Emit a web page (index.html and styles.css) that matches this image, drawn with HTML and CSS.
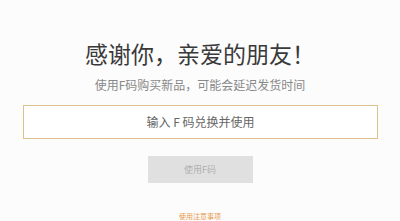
FILE: index.html
```html
<!DOCTYPE html>
<html lang="zh">
<head>
<meta charset="utf-8">
<link rel="stylesheet" href="styles.css">
</head>
<body>
<main class="page">
  <h1 class="title">感谢你，亲爱的朋友！</h1>
  <p class="subtitle">使用F码购买新品，可能会延迟发货时间</p>
  <div class="code-input"><span class="placeholder">输入 F 码兑换并使用</span></div>
  <button class="use-btn">使用F码</button>
  <a class="notes">使用注意事项</a>
</main>
</body>
</html>
```
FILE: styles.css
```css
html, body {
  margin: 0;
  padding: 0;
  background: #fcfcfc;
  font-family: "Noto Sans CJK SC", "Noto Sans", sans-serif;
}
.page {
  display: flex;
  flex-direction: column;
  align-items: center;
  height: 221px;
  overflow: hidden;
}
.title {
  margin: 38px 0 0;
  font-size: 23px;
  line-height: 30px;
  font-weight: 400;
  color: #3a3a3a;
}
.subtitle {
  margin: 9px 0 0;
  font-size: 12px;
  line-height: 16px;
  color: #888;
}
.code-input {
  margin: 12px 0 0 1px;
  width: 355px;
  height: 36px;
  box-sizing: border-box;
  border: 1px solid #dfbf8c;
  background: #fff;
  display: flex;
  align-items: center;
  justify-content: center;
}
.placeholder {
  font-size: 12px;
  color: #666;
}
.use-btn {
  margin-top: 17px;
  width: 105px;
  height: 29px;
  border: none;
  background: #e0e0e0;
  color: #b0b0b0;
  font-family: inherit;
  font-size: 9px;
  padding: 0;
}
.notes {
  margin-top: 28px;
  font-size: 7px;
  line-height: 10px;
  color: #e69a4a;
}
```
